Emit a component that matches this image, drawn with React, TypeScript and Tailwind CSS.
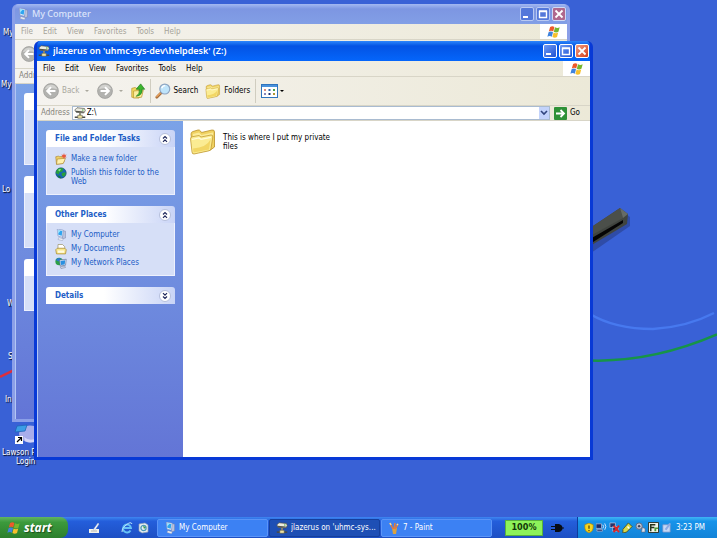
import type { ReactNode } from "react";

const UI = "font-['DejaVu_Sans_Condensed','DejaVu_Sans',sans-serif]";

type IconProps = { className?: string };

function ComputerIcon({ className = "w-3 h-3 shrink-0" }: IconProps) {
  return (
    <svg viewBox="0 0 16 16" className={className} aria-hidden="true">
      <path d="M10 2l4 1v9l-4 1z" fill="#b9c2dc" stroke="#7480a8" strokeWidth=".6" />
      <path d="M3 0l8 1.500L10 11l-6-1.500z" fill="#e3eefc" stroke="#7389bb" strokeWidth=".7" />
      <path d="M4 1.500l5.800 1-.8 6.500-4.500-1.200z" fill="#2fa5f0" />
      <path d="M4 1.500l3.500.6-3.200 4z" fill="#a5e8ff" />
      <path d="M5 11.500l6 1.500-1 2.500-6-1.500z" fill="#f1f3f9" stroke="#8791b0" strokeWidth=".6" />
    </svg>
  );
}

function DriveIcon({ className = "w-3 h-3" }: IconProps) {
  return (
    <svg viewBox="0 0 16 16" className={className} aria-hidden="true">
      <path d="M1 4l3-3 10 1 1 3-2 3-10-1z" fill="#ecece2" stroke="#4b4b42" strokeWidth=".9" />
      <path d="M2 5l11 1v1.600L3 7z" fill="#55554c" />
      <circle cx="11.800" cy="4" r=".9" fill="#3fae30" />
      <path d="M8 8v4" stroke="#8f8a70" strokeWidth="2.400" />
      <path d="M1 13.500h14" stroke="#4a4a45" strokeWidth="2" />
      <path d="M5 11h6v4H5z" fill="#efe3a0" stroke="#4b4b42" strokeWidth=".7" />
    </svg>
  );
}

function FolderIcon({ className = "w-4 h-4" }: IconProps) {
  return (
    <svg viewBox="0 0 28 28" className={className} aria-hidden="true">
      <path d="M2 7q0-2 2-2.500L9 3q1.500-.3 2.500 1l1 1.500L23 3q2.500-.4 2.500 2V20l-4 3L4 26.500z" fill="#f0d262" stroke="#b98f27" strokeWidth=".8" />
      <path d="M4 7l6-1.500L12.500 8 24 5.500V9L4 13z" fill="#fbeb9a" />
      <path d="M1.500 12q-.2-2 2-2.300L10 8.500l2 1.500 10-2q2-.2 1.800 2L22 21.500q-.3 2-2 2.300L5 27q-1.800.2-2-2z" fill="#fbec93" stroke="#c39c35" strokeWidth=".8" />
      <path d="M3 12.500l7-1.500 2 1.300 10-2" fill="none" stroke="#fffbdc" strokeWidth="1.200" />
      <path d="M4.500 25.500l15.500-3 1.500-10q-4 8-17.500 9z" fill="#f2d664" />
    </svg>
  );
}

function NewFolderIcon() {
  return (
    <svg viewBox="0 0 16 16" className="w-3 h-3" aria-hidden="true">
      <path d="M1 5l4-1 1 1 6-1v8l-2 2-8 1z" fill="#f0d268" stroke="#a67f2e" strokeWidth=".8" />
      <path d="M3 8l11-1-3 7-9 1z" fill="#fff1ae" stroke="#a67f2e" strokeWidth=".8" />
      <path d="M12 0l.9 2.500L15.500 2l-1.500 2 1.500 2-2.500-.5L12 8l-1-2.500-2.500.5L10 4 8.500 2l2.600.5z" fill="#e8573f" />
    </svg>
  );
}

function GlobeIcon() {
  return (
    <svg viewBox="0 0 16 16" className="w-3 h-3" aria-hidden="true">
      <circle cx="8" cy="8" r="7" fill="#1866b5" stroke="#0f4768" strokeWidth=".7" />
      <path d="M3 3q4-3 8-1l-1 4-4 1-1 3-4-2zM9 8l5-1q1 4-3 6l-2-2z" fill="#28a03a" />
      <path d="M4 4q2-2 4-1L6 6z" fill="#8fdf92" />
      <path d="M3 11l4 1 1 3q-3 0-5-4z" fill="#167a37" />
    </svg>
  );
}

function DocumentsIcon() {
  return (
    <svg viewBox="0 0 16 16" className="w-3 h-3" aria-hidden="true">
      <path d="M4 2h6l3 3v6H4z" fill="#fff" stroke="#8c8250" strokeWidth=".8" />
      <path d="M1 9l2-2h10l2 2-1 5.500H2z" fill="#f9e78e" stroke="#a8892f" strokeWidth="1" />
      <path d="M3.500 10h9l-.5 3h-8z" fill="#fffbe0" />
    </svg>
  );
}

function NetworkIcon() {
  return (
    <svg viewBox="0 0 16 16" className="w-3 h-3" aria-hidden="true">
      <circle cx="5.500" cy="6" r="5" fill="#2b9f48" />
      <path d="M1 4q3-4 7-2L5 6z" fill="#2b78d4" />
      <path d="M6 4l9-1-1 8-7 1z" fill="#e5edf9" stroke="#51648e" strokeWidth=".8" />
      <path d="M7.300 5.200l6.300-.8-.7 5.500-5 .8z" fill="#2a8fe0" />
      <path d="M7 13l6-1 1 2-6 1.500z" fill="#d0d5e4" stroke="#6a7597" strokeWidth=".6" />
    </svg>
  );
}

function WindowsFlag({ className = "w-4 h-4" }: IconProps) {
  return (
    <svg viewBox="0 0 18 18" className={className} aria-hidden="true">
      <path d="M4 2.500q3-1.800 5.500 0L8 8.200q-2.700-1.500-5.700 0z" fill="#ee5a2a" />
      <path d="M10.300 3q3 1.600 6 0L14.700 8.800q-3 1.600-5.900 0z" fill="#77b62c" />
      <path d="M2 9.200q3-1.600 5.700 0L6.200 15q-2.700-1.600-5.700 0z" fill="#3f83dd" />
      <path d="M8.500 9.800q3 1.600 5.900 0L12.900 15.500q-3 1.700-5.900 0z" fill="#f7c02c" />
    </svg>
  );
}

function NavCircle({ forward = false }: { forward?: boolean }) {
  return (
    <svg viewBox="0 0 18 18" className="w-4 h-4 shrink-0" aria-hidden="true">
      <circle cx="9" cy="9" r="8.400" fill="#b2b2af" stroke="#9b9b98" strokeWidth=".8" />
      <path d="M2 7q2-5 7-5t7 5q-7-2-14 0z" fill="#d2d2cf" />
      <path
        d={forward ? "M4 9h9M9 4.700L13.300 9 9 13.300" : "M14 9H5M9 4.700L4.700 9 9 13.300"}
        stroke="#fff"
        strokeWidth="2.200"
        fill="none"
      />
    </svg>
  );
}

function UpIcon() {
  return (
    <svg viewBox="0 0 16 18" className="w-4 h-4" aria-hidden="true">
      <path d="M1 6l4-1 1 1 5-1v10l-2 2-8-1z" fill="#f3d960" stroke="#b9952f" strokeWidth=".8" />
      <path d="M3 9l11-1-2 8-9 1z" fill="#fcee9f" stroke="#b9952f" strokeWidth=".8" />
      <path d="M6 15q4.500-3 3.500-8H6l5-6 4.500 6H12.500Q13.500 13.500 6 15z" fill="#3bb52d" stroke="#1d7d1c" strokeWidth=".8" />
    </svg>
  );
}

function SearchIcon() {
  return (
    <svg viewBox="0 0 18 18" className="w-4 h-4" aria-hidden="true">
      <path d="M7 11l-5 5" stroke="#a86e3a" strokeWidth="3" strokeLinecap="round" />
      <path d="M6 11.300l-4 4" stroke="#f0a860" strokeWidth="1.300" strokeLinecap="round" />
      <circle cx="11" cy="6.800" r="5.600" fill="#bfe4fa" stroke="#8ea4c0" strokeWidth="1.300" />
      <path d="M7.500 6q1-3 4-3" stroke="#fff" strokeWidth="1.500" fill="none" />
    </svg>
  );
}

function ViewsIcon() {
  return (
    <svg viewBox="0 0 17 14" className="w-[17px] h-[14px]" aria-hidden="true">
      <rect x=".5" y=".5" width="16" height="13" fill="#fff" stroke="#2f74bd" />
      <path d="M1 1h15v2H1z" fill="#4a92dc" />
      <path d="M3 5h2v2H3z" fill="#d98a7a" />
      <path d="M7.500 5h2v2h-2z" fill="#3163a8" />
      <path d="M12 5h2v2h-2z" fill="#4aa04a" />
      <path d="M3 9h2v2H3z" fill="#8787b8" />
      <path d="M7.500 9h2v2h-2z" fill="#1e3272" />
      <path d="M12 9h2v2h-2z" fill="#b39530" />
    </svg>
  );
}

function Caret() {
  return (
    <svg viewBox="0 0 4 2" className="h-0.5 w-1" aria-hidden="true">
      <path d="M0 0h4L2 2z" fill="currentColor" />
    </svg>
  );
}

function TitleButton({ kind, active }: { kind: "Minimize" | "Maximize" | "Close"; active: boolean }) {
  const close = kind === "Close";
  const fill = close
    ? active
      ? "bg-linear-to-br from-[#f09a7e] to-[#d53d12] border-white"
      : "bg-[#b0688d] border-[#d0d8f4]"
    : active
      ? "bg-linear-to-br from-[#6f9bf5] to-[#1e50d2] border-white"
      : "bg-[#5478da] border-[#b9c9f2]";
  return (
    <button type="button" aria-label={kind} className={`size-[14px] shrink-0 rounded-xs border ${fill}`}>
      <svg viewBox="0 0 12 12" className="block size-3" fill="none" stroke="#fff" aria-hidden="true">
        {kind === "Minimize" && <path d="M2 9h5" strokeWidth="2" />}
        {kind === "Maximize" && <path d="M2.500 9.500h7v-6h-7zM2 3h8" strokeWidth="1.400" />}
        {close && <path d="M2.500 2.500l7 7M9.500 2.500l-7 7" strokeWidth="1.800" />}
      </svg>
    </button>
  );
}

function Panel({ title, open = true, children }: { title?: string; open?: boolean; children?: ReactNode }) {
  return (
    <section>
      <div className="flex h-[17px] items-center justify-between rounded-t-[3px] bg-linear-to-r from-white from-45% to-[#c9d4f6] pr-1 pl-[9px]">
        {title && (
          <>
            <h2 className="text-[8px] font-bold whitespace-nowrap text-[#215dc6]">{title}</h2>
            <button
              type="button"
              aria-label={`Toggle ${title}`}
              className="size-3 shrink-0 rounded-full border border-[#b5bfdc] bg-white"
            >
              <svg viewBox="0 0 10 10" className="block size-[10px]" fill="none" stroke="#20295c" aria-hidden="true">
                <path d={open ? "M3 4.500l2-2 2 2M3 7.800l2-2 2 2" : "M3 2.200l2 2 2-2M3 5.500l2 2 2-2"} strokeWidth="1.200" />
              </svg>
            </button>
          </>
        )}
      </div>
      {children && (
        <ul className="border border-t-0 border-[#eef1fd] bg-[#d6dff7] pt-[5px] pb-[5px] pl-2">{children}</ul>
      )}
    </section>
  );
}

function PanelLink({ icon, children }: { icon: ReactNode; children: ReactNode }) {
  return (
    <li>
      <a href="#" className="flex items-start gap-1 pr-3 text-[8px] leading-[9px] text-[#215dc6]">
        <span className="mt-px shrink-0">{icon}</span>
        <span className="mt-[2px] mb-[3px]">{children}</span>
      </a>
    </li>
  );
}

const menus = ["File", "Edit", "View", "Favorites", "Tools", "Help"];

type ExplorerProps = {
  id: string;
  title: string;
  icon: ReactNode;
  address?: string;
  active?: boolean;
  place: string;
  tasks: ReactNode;
  children?: ReactNode;
};

function Explorer({ id, title, icon, address, active = false, place, tasks, children }: ExplorerProps) {
  return (
    <section
      aria-label={title}
      className={`absolute flex flex-col overflow-hidden rounded-t-md border-x-[3px] border-b-[3px] ${place} ${
        active ? "border-[#0839d6] bg-[#0855dd]" : "border-[#8b9fe8] bg-[#8b9fe8]"
      }`}
    >
      <header
        className={`flex h-5 shrink-0 items-center gap-[3px] pr-px ${
          active
            ? "bg-linear-to-b from-[#2d86fb] via-[#0453e4] via-25% to-[#0566fb]"
            : "bg-linear-to-b from-[#a3b8f1] via-[#7d96e2] via-25% to-[#829fe6]"
        }`}
      >
        {icon}
        <h1
          className={`min-w-0 flex-1 truncate font-['Noto_Sans',sans-serif] text-[9px] ${
            active ? "font-semibold text-white" : "font-medium text-[#dbe4fa]"
          }`}
        >
          {title}
        </h1>
        <div className="flex gap-0.5">
          <TitleButton kind="Minimize" active={active} />
          <TitleButton kind="Maximize" active={active} />
          <TitleButton kind="Close" active={active} />
        </div>
      </header>

      <nav className="flex h-4 shrink-0 items-stretch border-b border-[#d8d5c7] bg-linear-to-r from-[#f5f3ef] to-[#ece9d8]">
        <ul className={`flex flex-1 items-center gap-2.5 pl-1.5 text-[8px] ${active ? "text-black" : "text-[#a5a399]"}`}>
          {menus.map((m) => (
            <li key={m}>
              <button type="button">{m}</button>
            </li>
          ))}
        </ul>
        <div className="flex w-[27px] items-center justify-center bg-white">
          <WindowsFlag className="size-[14px]" />
        </div>
      </nav>

      <div className="flex h-7 shrink-0 items-center bg-linear-to-r from-[#f5f3ef] to-[#ece9d8] pl-1.5 text-[8px]">
        <button type="button" disabled aria-label="Back" className="flex items-center gap-[3px] text-[#aaa89e]">
          <NavCircle />
          {active && (
            <>
              <span className="mr-[3px]">Back</span>
              <Caret />
            </>
          )}
        </button>
        {active && (
          <>
            <button type="button" disabled aria-label="Forward" className="ml-2 flex items-center gap-1.5 text-[#aaa89e]">
              <NavCircle forward />
              <Caret />
            </button>
            <button type="button" aria-label="Up" className="ml-[7px]">
              <UpIcon />
            </button>
            <span className="mx-1 h-6 w-px bg-[#d0cdc0]" />
            <button type="button" className="flex items-center gap-0.5">
              <SearchIcon />
              Search
            </button>
            <button type="button" className="ml-[7px] flex items-center gap-[3px]">
              <FolderIcon />
              Folders
            </button>
            <span className="mx-[5px] h-6 w-px bg-[#d0cdc0]" />
            <button type="button" aria-label="Views" className="flex items-center gap-0.5 text-black">
              <ViewsIcon />
              <Caret />
            </button>
          </>
        )}
      </div>

      <form className="flex h-4 shrink-0 items-center border-y border-[#d8d5c7] bg-linear-to-r from-[#f5f3ef] to-[#ece9d8] pl-1 text-[8px]">
        <label htmlFor={active ? `${id}-address` : undefined} className="text-[#85837a]">
          Address
        </label>
        {active && (
          <>
            <div className="ml-0.5 flex h-[14px] min-w-0 flex-1 items-center border border-[#a9bbd0] bg-white">
              <DriveIcon className="ml-px size-3 shrink-0" />
              <input
                id={`${id}-address`}
                defaultValue={address}
                className="ml-px min-w-0 flex-1 bg-transparent text-[8px] outline-none"
              />
              <button
                type="button"
                aria-label="Show addresses"
                className="flex h-3 w-[10px] items-center justify-center bg-[#c3d3fb] text-[#31457e]"
              >
                <svg viewBox="0 0 8 6" className="h-1.5 w-2" fill="none" stroke="currentColor" strokeWidth="1.600" aria-hidden="true">
                  <path d="M1 1l3 3 3-3" />
                </svg>
              </button>
            </div>
            <button type="button" className="ml-1 flex w-9 items-center gap-[3px]">
              <svg viewBox="0 0 13 13" className="size-[13px]" aria-hidden="true">
                <rect width="13" height="13" rx="1" fill="#2e9137" />
                <path d="M2 6.500h8M6.500 3L10 6.500 6.500 10" fill="none" stroke="#fff" strokeWidth="1.800" />
              </svg>
              Go
            </button>
          </>
        )}
      </form>

      <div className="flex min-h-0 flex-1">
        <aside className="flex w-[146px] shrink-0 flex-col gap-[11px] overflow-hidden border-l border-[#b3c6f4] bg-linear-to-b from-[#7ba2e7] to-[#6375d6] pt-[9px] pr-2 pl-2">
          {tasks}
        </aside>
        <main className="min-w-0 flex-1 bg-white">{children}</main>
      </div>
    </section>
  );
}

function DesktopLabel({ place, children }: { place: string; children: ReactNode }) {
  return (
    <span className={`absolute text-[8px] leading-[9px] whitespace-nowrap text-white [text-shadow:1px_1px_1px_#000] ${place}`}>
      {children}
    </span>
  );
}

function Wallpaper() {
  return (
    <>
      <svg viewBox="0 0 157 190" className="absolute top-[190px] left-[560px] h-[190px] w-[157px]" aria-hidden="true">
        <path d="M30 36L60 17l9 7v9L30 60z" fill="#1c2650" opacity=".35" transform="translate(1 3)" />
        <path d="M30 38L60 18l8 6-1 10-37 22z" fill="#40443f" />
        <path d="M30 49l33-19v3L30 54z" fill="#050505" />
        <path d="M30 38l30-20 3 10-33 18z" fill="#4b4f4a" />
        <path d="M60 18l8 6-5 4z" fill="#666b66" />
        <path d="M30 124q25 15 63 15 34-2 61-16" fill="none" stroke="#4779ef" strokeWidth="2.500" />
        <path d="M30 170.500q62 2 127-26" fill="none" stroke="#179447" strokeWidth="2.500" />
      </svg>
      <svg viewBox="0 0 14 12" className="absolute top-[368px] left-0 h-3 w-3.5" aria-hidden="true">
        <path d="M0 9L14 2" stroke="#dc2e3d" strokeWidth="2.500" />
      </svg>
    </>
  );
}

function TaskButton({ icon, active = false, children }: { icon: ReactNode; active?: boolean; children: ReactNode }) {
  return (
    <button
      type="button"
      className={`flex h-[18px] w-[111px] min-w-0 items-center gap-[3px] rounded-xs border pl-1.5 text-[8px] text-white ${
        active ? "border-[#153f9c] bg-[#1e4fb5]" : "border-[#5a94f8] bg-[#3c81f3]"
      }`}
    >
      {icon}
      <span className="truncate">{children}</span>
    </button>
  );
}

function TrayIcons() {
  return (
    <>
      <svg viewBox="0 0 12 12" className="size-[10px]" aria-label="Security">
        <path d="M6 0l5 2v4q0 4-5 6-5-2-5-6V2z" fill="#f6d51f" stroke="#a28214" strokeWidth=".8" />
        <path d="M6 3v4M6 8.500V10" stroke="#4a3b00" strokeWidth="1.400" />
      </svg>
      <svg viewBox="0 0 12 12" className="size-[11px]" aria-label="Wireless">
        <path d="M0 2h6v5H0zM1 8h6v2H1z" fill="#1c2c66" stroke="#aebcdd" strokeWidth=".8" />
        <path d="M7.500 3q1.500 2 0 4M9.500 1.500q2.500 3.500 0 7" fill="none" stroke="#dce9ff" strokeWidth="1" />
      </svg>
      <svg viewBox="0 0 12 12" className="size-[11px]" aria-label="Network disconnected">
        <path d="M1 1h6v5H1zM4 5h6v5H4z" fill="#24356e" stroke="#b9c5e2" strokeWidth=".8" />
        <path d="M5 4l6 7M11 4l-6 7" stroke="#e02626" strokeWidth="2" />
      </svg>
      <svg viewBox="0 0 12 12" className="size-[11px]" aria-label="Remove hardware">
        <path d="M1 8l6-7 4 4-6 6-4 1z" fill="#d9d94a" stroke="#4c4d13" strokeWidth=".9" />
        <path d="M6 5l2 2" stroke="#fff" strokeWidth="1.500" />
      </svg>
      <svg viewBox="0 0 12 12" className="size-[11px]" aria-label="Volume">
        <circle cx="4.500" cy="4.500" r="3.500" fill="#bcc4d4" stroke="#596580" />
        <circle cx="4.500" cy="4.500" r="1.300" fill="#39435c" />
        <path d="M8 6l3 1v4H7z" fill="#dde3ee" stroke="#596580" strokeWidth=".7" />
      </svg>
      <svg viewBox="0 0 12 12" className="size-[11px]" aria-label="Monitor">
        <path d="M.5.500h11v11H.5z" fill="#f1f3e6" stroke="#252b20" />
        <path d="M3 10V3h5M3 6h4" stroke="#26331c" strokeWidth="1.600" fill="none" />
        <path d="M7 6h4v1.500H9V10H7z" fill="#4b9a3a" />
      </svg>
      <svg viewBox="0 0 12 12" className="size-[11px]" aria-label="Notes">
        <path d="M2 3h8v8H2z" fill="#c5d8f6" stroke="#7b93c6" strokeWidth=".8" />
        <path d="M4 8l5-7 2 1-5 7z" fill="#8aa9e4" />
      </svg>
    </>
  );
}

function Taskbar() {
  return (
    <footer className="flex h-[21px] shrink-0 items-stretch bg-linear-to-b from-[#3f86f1] via-[#245edb] via-20% to-[#1d4fc4]">
      <button
        type="button"
        className="flex w-[68px] items-center gap-[3px] rounded-r-lg bg-linear-to-b from-[#62b562] via-[#3c9a3c] via-25% to-[#2c7f2c] pl-[7px] font-['Open_Sans',sans-serif] text-[12px] leading-none font-bold text-white italic [text-shadow:1px_1px_1px_#1b4f1b]"
      >
        <WindowsFlag className="size-[14px] shrink-0" />
        start
      </button>
      <div className="flex w-[89px] items-center pl-5">
        <button type="button" aria-label="Tablet pen">
          <svg viewBox="0 0 12 12" className="size-3" aria-hidden="true">
            <path d="M1 7h10v4H1z" fill="#f2f2ec" />
            <path d="M5 8l5-7 1 1-4 6z" fill="#fff" stroke="#a6b4d1" strokeWidth=".5" />
            <path d="M3 9h6" stroke="#b8b8b2" />
          </svg>
        </button>
        <button type="button" aria-label="Internet Explorer" className="ml-[21px]">
          <svg viewBox="0 0 12 12" className="size-3" aria-hidden="true">
            <path d="M9.500 8.500A4 4 0 1 1 10 6H3" fill="none" stroke="#66c2f6" strokeWidth="1.900" />
            <path d="M1 10Q0 7 5 3t6-1" fill="none" stroke="#b9e2fa" strokeWidth="1" />
          </svg>
        </button>
        <button type="button" aria-label="Mail" className="ml-1">
          <svg viewBox="0 0 12 12" className="size-3" aria-hidden="true">
            <path d="M2 2l6-1 3 2v7l-6 1-3-2z" fill="#e8eef2" stroke="#8a9db5" strokeWidth=".7" />
            <circle cx="6.500" cy="6" r="2.600" fill="none" stroke="#4b98b8" strokeWidth="1.300" />
            <path d="M6 4l3 1-2 2z" fill="#3a9b4e" />
          </svg>
        </button>
      </div>
      <div className="flex flex-1 items-center gap-px">
        <TaskButton icon={<ComputerIcon />}>My Computer</TaskButton>
        <TaskButton active icon={<DriveIcon className="size-3 shrink-0" />}>
          jlazerus on 'uhmc-sys...
        </TaskButton>
        <TaskButton
          icon={
            <svg viewBox="0 0 12 12" className="size-3 shrink-0" aria-hidden="true">
              <path d="M4 6h5l-1 6H5z" fill="#d9a23f" />
              <path d="M5 7L2 1M6 7l1-6M7 7l3-5" stroke="#e37b3a" strokeWidth="1.500" />
              <path d="M2 1l1 2M9 3l1-1" stroke="#f0e0a0" strokeWidth="1.600" />
            </svg>
          }
        >
          7 - Paint
        </TaskButton>
      </div>
      <div className="flex w-[72px] items-center gap-[7px]">
        <span className="flex h-4 w-[38px] items-center justify-center border border-[#58b13d] bg-[#8df25a] text-[9px] font-bold text-[#123808]">
          100%
        </span>
        <svg viewBox="0 0 14 12" className="h-3 w-3.5" aria-label="Plugged in">
          <path d="M5 2h4q3.500 1 3.500 4T9 10H5z" fill="#080c14" />
          <path d="M1 4.500h5M1 7.500h5M12 6h2" stroke="#080c14" strokeWidth="1.200" />
        </svg>
      </div>
      <div className="flex w-[140px] items-center gap-0.5 border-l border-[#0e3c9c] bg-linear-to-b from-[#3fb5f5] via-[#1793ea] via-20% to-[#1283d8] pl-[6px] text-[8px] text-white">
        <TrayIcons />
        <time className="flex-1 pr-3 text-right whitespace-nowrap">3:23 PM</time>
      </div>
    </footer>
  );
}

export default function App() {
  return (
    <div className={`flex min-h-screen flex-col bg-[#3961d6] ${UI}`}>
      <div className="relative min-h-[460px] flex-1 overflow-hidden">
        <Wallpaper />
        <DesktopLabel place="top-[28px] left-[3px]">My</DesktopLabel>
        <DesktopLabel place="top-[80px] left-px">My</DesktopLabel>
        <DesktopLabel place="top-[185px] left-[2px]">Lo</DesktopLabel>
        <DesktopLabel place="top-[299px] left-[7px]">W</DesktopLabel>
        <DesktopLabel place="top-[352px] left-[8px]">S</DesktopLabel>
        <DesktopLabel place="top-[395px] left-[5px]">In</DesktopLabel>
        <svg viewBox="0 0 24 20" className="absolute top-[424px] left-[14px] h-5 w-6" aria-hidden="true">
          <ellipse cx="16" cy="10" rx="11" ry="8.500" fill="#a8adea" />
          <path d="M10 13q6 5 13 1v3q-7 3-12 0z" fill="#d4d5f8" />
          <path d="M3 2l10-1-2 6-10 1z" fill="#3b9de6" stroke="#1f66b8" strokeWidth=".8" />
          <path d="M1 12h8v8H1z" fill="#fff" />
          <path d="M3 18l4-4M4 13.500h3.500V17" stroke="#000" strokeWidth="1.200" fill="none" />
        </svg>
        <DesktopLabel place="top-[448px] left-[2px]">Lawson P</DesktopLabel>
        <DesktopLabel place="top-[457px] left-[16px]">Login</DesktopLabel>

        <Explorer
          id="computer"
          title="My Computer"
          icon={<ComputerIcon className="ml-0.5 size-3 shrink-0" />}
          place="top-[4px] left-[12px] h-[418px] w-[558px]"
          tasks={
            <>
              <Panel>
                <li className="h-11" />
              </Panel>
              <Panel>
                <li className="h-11" />
              </Panel>
              <Panel>
                <li className="h-6" />
              </Panel>
            </>
          }
        />

        <Explorer
          id="helpdesk"
          active
          title="jlazerus on 'uhmc-sys-dev\helpdesk' (Z:)"
          icon={<DriveIcon className="ml-px size-3 shrink-0" />}
          address="Z:\"
          place="top-[41px] left-[34px] h-[419px] w-[559px]"
          tasks={
            <>
              <Panel title="File and Folder Tasks">
                <PanelLink icon={<NewFolderIcon />}>Make a new folder</PanelLink>
                <PanelLink icon={<GlobeIcon />}>Publish this folder to the Web</PanelLink>
              </Panel>
              <Panel title="Other Places">
                <PanelLink icon={<ComputerIcon />}>My Computer</PanelLink>
                <PanelLink icon={<DocumentsIcon />}>My Documents</PanelLink>
                <PanelLink icon={<NetworkIcon />}>My Network Places</PanelLink>
              </Panel>
              <Panel title="Details" open={false} />
            </>
          }
        >
          <button type="button" className="flex w-[156px] items-start gap-1.5 pt-1.5 pl-1.5 text-left text-[8px] leading-[9px]">
            <FolderIcon className="size-7 shrink-0" />
            <span className="mt-1.5">This is where I put my private files</span>
          </button>
        </Explorer>
      </div>
      <Taskbar />
    </div>
  );
}
